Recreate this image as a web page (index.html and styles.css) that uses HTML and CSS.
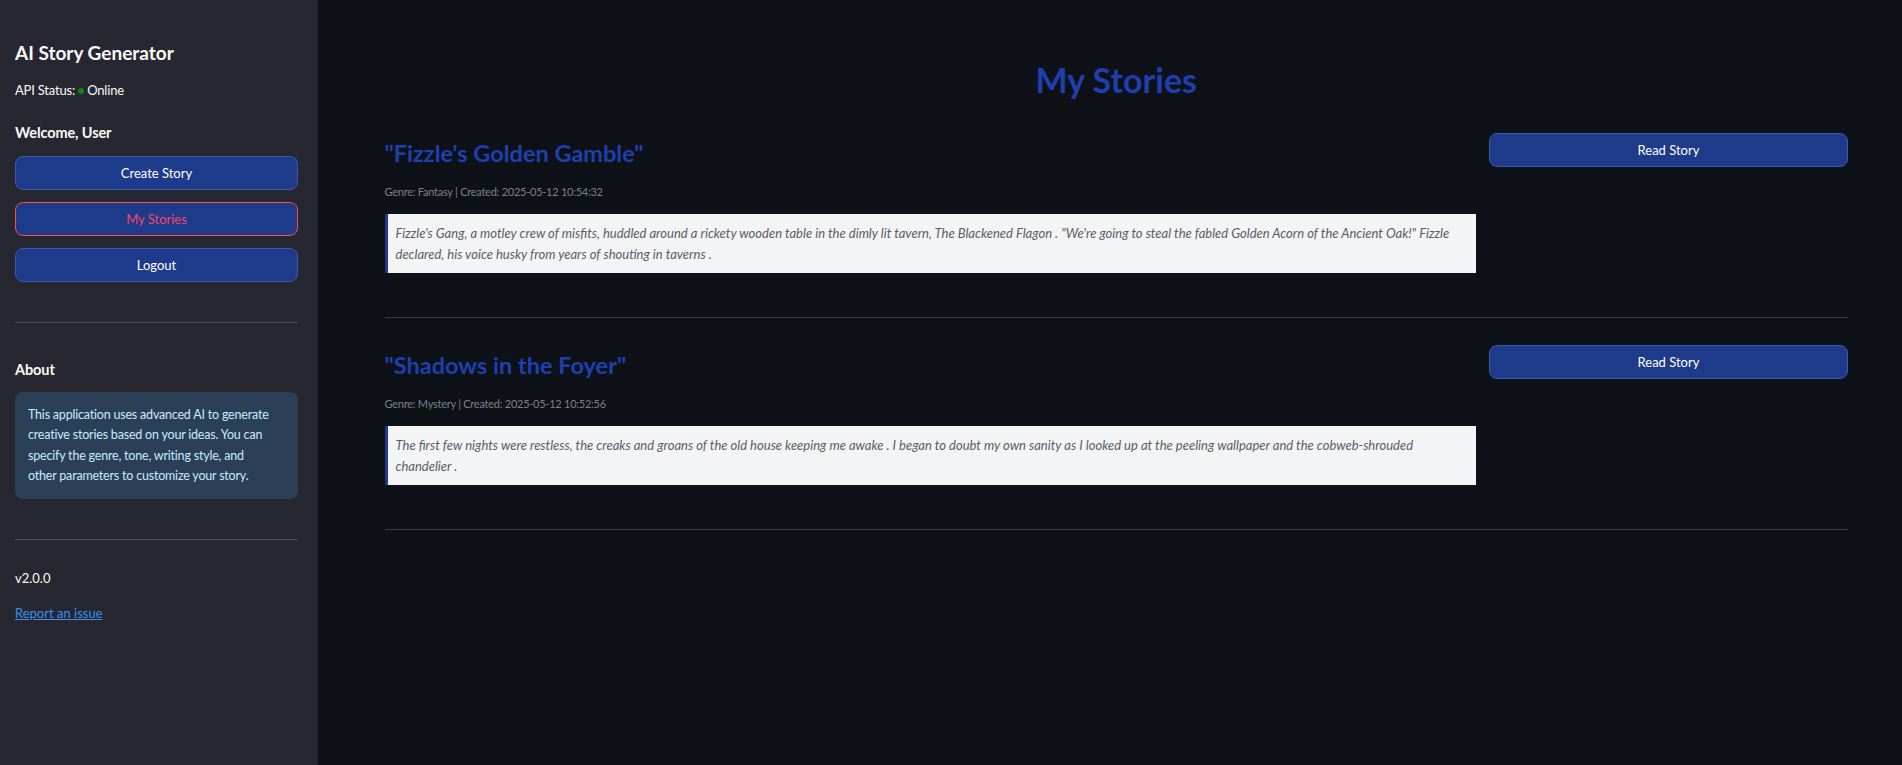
FILE: index.html
```html
<!DOCTYPE html>
<html lang="en">
<head>
<meta charset="utf-8">
<title>AI Story Generator</title>
<link rel="stylesheet" href="styles.css">
</head>
<body>
<div class="app">
  <aside class="sidebar">
    <h2 class="app-title">AI Story Generator</h2>
    <p class="status">API Status: <span class="dot"></span> Online</p>
    <h4 class="side-head welcome">Welcome, User</h4>
    <div class="nav">
      <button class="btn">Create Story</button>
      <button class="btn active">My Stories</button>
      <button class="btn">Logout</button>
    </div>
    <hr class="side-rule first">
    <h4 class="side-head about">About</h4>
    <div class="info">This application uses advanced AI to generate creative stories based on your ideas. You can specify the genre, tone, writing style, and <span class="nowrap">other parameters</span> to customize your story.</div>
    <hr class="side-rule second">
    <p class="version">v2.0.0</p>
    <a class="report" href="#">Report an issue</a>
  </aside>
  <main class="main">
    <h1 class="page-title">My Stories</h1>
    <section class="story">
      <div class="story-body">
        <h3 class="story-title">"Fizzle's Golden Gamble"</h3>
        <p class="meta">Genre: Fantasy | Created: 2025-05-12 10:54:32</p>
        <blockquote class="excerpt">Fizzle's Gang, a motley crew of misfits, huddled around a rickety wooden table in the dimly lit tavern, The Blackened Flagon . "We're going to steal the fabled Golden Acorn of the Ancient Oak!" Fizzle declared, his voice husky from years of shouting in taverns .</blockquote>
      </div>
      <div class="story-action"><button class="btn">Read Story</button></div>
    </section>
    <hr class="rule">
    <section class="story">
      <div class="story-body">
        <h3 class="story-title">"Shadows in the Foyer"</h3>
        <p class="meta">Genre: Mystery | Created: 2025-05-12 10:52:56</p>
        <blockquote class="excerpt">The first few nights were restless, the creaks and groans of the old house keeping me awake . I began to doubt my own sanity as I looked up at the peeling wallpaper and the cobweb-shrouded chandelier .</blockquote>
      </div>
      <div class="story-action"><button class="btn">Read Story</button></div>
    </section>
    <hr class="rule">
  </main>
</div>
</body>
</html>
```
FILE: styles.css
```css
* { box-sizing: border-box; }
html, body { margin: 0; padding: 0; }
body {
  font-family: Lato, "Noto Sans", sans-serif;
  background: #0e1117;
  color: #fafafa;
  width: 1902px;
  height: 765px;
  overflow: hidden;
}
.app { display: flex; height: 765px; }

.sidebar {
  width: 318px;
  flex: none;
  background: #262730;
  padding: 42px 20px 0 15px;
  display: flex;
  flex-direction: column;
}
.app-title {
  margin: 0;
  font-size: 19px;
  line-height: 22px;
  font-weight: 700;
  color: #fafafa;
}
.status {
  margin: 17px 0 0;
  font-size: 13px;
  line-height: 18px;
  letter-spacing: -0.2px;
}
.dot {
  display: inline-block;
  width: 6px; height: 6px;
  border-radius: 50%;
  background: #0a8a0a;
  vertical-align: 1px;
}
.side-head {
  margin: 0;
  font-size: 14.5px;
  line-height: 20px;
  font-weight: 700;
  letter-spacing: -0.1px;
}
.welcome { margin-top: 24px; }
.nav {
  margin-top: 13px;
  display: flex;
  flex-direction: column;
  gap: 12px;
}
.btn {
  display: block;
  width: 100%;
  height: 34px;
  border-radius: 8px;
  border: 1px solid #3d5aa8;
  background: #1e3a8a;
  color: #ffffff;
  font-family: Lato, "Noto Sans", sans-serif;
  font-size: 13px;
  cursor: pointer;
}
.btn.active {
  border-color: #ff4b4b;
  color: #f5466b;
}
.side-rule {
  border: none;
  border-top: 1px solid #4c4d55;
  margin: 0;
}
.side-rule.first { margin-top: 40px; }
.about { margin-top: 37px; }
.info {
  margin-top: 12px;
  background: #2b3f57;
  color: #c7ebff;
  border-radius: 8px;
  padding: 13px 10px 13px 13px;
  font-size: 12.5px;
  letter-spacing: -0.2px;
  line-height: 20.3px;
}
.nowrap { white-space: nowrap; }
.side-rule.second { margin-top: 40px; }
.version {
  margin: 29px 0 0;
  font-size: 13px;
  line-height: 18px;
}
.report {
  margin-top: 17px;
  font-size: 13px;
  line-height: 18px;
  color: #3d8ef0;
  text-decoration: underline;
  align-self: flex-start;
}

.main {
  flex: 1;
  padding: 58px 54px 0 66.5px;
}
.page-title {
  margin: 0 0 31px;
  text-align: center;
  font-size: 34px;
  line-height: 44px;
  font-weight: 700;
  color: #1e40af;
}
.story {
  display: grid;
  grid-template-columns: 1fr 359px;
  column-gap: 13px;
  align-items: start;
}
.story-title {
  margin: 0;
  font-size: 23.5px;
  line-height: 40px;
  font-weight: 700;
  color: #1e40af;
}
.meta {
  margin: 10px 0 0;
  font-size: 11px;
  letter-spacing: -0.25px;
  line-height: 18px;
  color: #7d808c;
}
.excerpt {
  margin: 13px 0 0;
  background: #f3f4f6;
  border-left: 3px solid #1e3a8a;
  padding: 9px 10px 9px 8px;
  font-size: 13px;
  line-height: 20.5px;
  font-style: italic;
  color: #5a5d66;
}
.rule {
  border: none;
  border-top: 1px solid #3a3c42;
  margin: 44px 0 27px;
}
```
